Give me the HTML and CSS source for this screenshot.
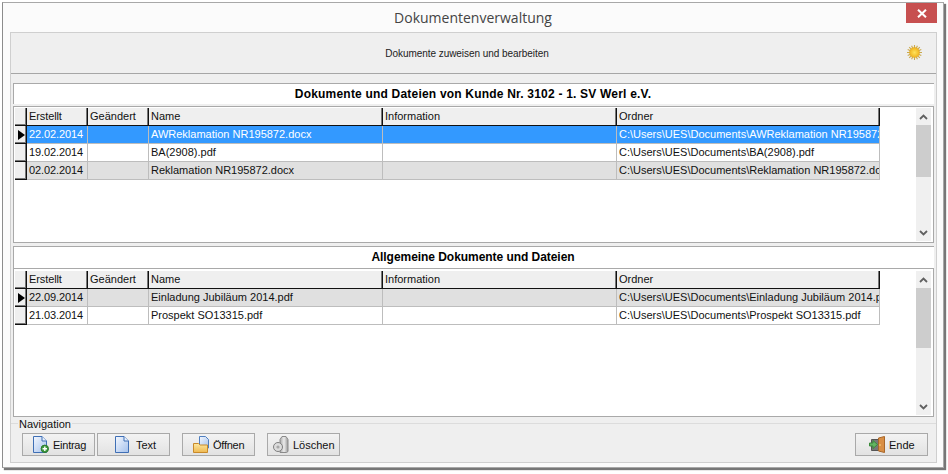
FILE: index.html
```html
<!DOCTYPE html>
<html lang="de">
<head>
<meta charset="utf-8">
<title>Dokumentenverwaltung</title>
<link rel="stylesheet" href="styles.css">
</head>
<body>
<svg class="defs" width="0" height="0" aria-hidden="true">
  <defs>
    <linearGradient id="page" x1="0" y1="0" x2="1" y2="1"><stop offset="0" stop-color="#f4f8fe"/><stop offset="1" stop-color="#a3c0ec"/></linearGradient>
    <linearGradient id="fold" x1="0" y1="0" x2="0" y2="1"><stop offset="0" stop-color="#fde9a2"/><stop offset="1" stop-color="#eeb850"/></linearGradient>
    <linearGradient id="bin" x1="0" y1="0" x2="1" y2="0"><stop offset="0" stop-color="#a9a9a9"/><stop offset=".5" stop-color="#ececec"/><stop offset="1" stop-color="#9a9a9a"/></linearGradient>
    <radialGradient id="sun"><stop offset="0" stop-color="#ffe25a"/><stop offset="1" stop-color="#f0b41e"/></radialGradient>
    <symbol id="doc" viewBox="0 0 14 17"><path d="M.5.500h8.500l4.500 4.500v11.500h-13z" fill="url(#page)" stroke="#3f6fb5"/><path d="M9 .5v4.500h4.500" fill="#e8f0fb" stroke="#3f6fb5"/></symbol>
  </defs>
</svg>
<div class="window">
  <div class="titlebar">
    <span class="title">Dokumentenverwaltung</span>
    <button class="close" type="button" aria-label="Schließen"><svg width="10" height="9" viewBox="0 0 10 9"><path d="M1 .7 9 8.300M9 .7 1 8.300" stroke="#fff" stroke-width="2"/></svg></button>
  </div>
  <div class="panel">
    <header class="head">
      <span class="head-text">Dokumente zuweisen und bearbeiten</span>
      <svg class="sun" width="15" height="15" viewBox="0 0 15 15"><g stroke="#c9a94e" stroke-width="1.100"><path d="M7.500 0v15M0 7.500h15M2.200 2.200l10.600 10.600M12.800 2.200 2.200 12.800M4.600.7l5.800 13.600M10.400.7 4.600 14.300M.7 4.600l13.600 5.800M14.300 4.600.7 10.400"/></g><circle cx="7.500" cy="7.500" r="5" fill="url(#sun)" stroke="#e2a92a" stroke-width=".6"/></svg>
    </header>
    <div class="content">
      <section class="section section-a">
        <h2 class="sec-title">Dokumente und Dateien von Kunde Nr. 3102 - 1. SV Werl e.V.</h2>
        <div class="frame frame-a">
          <div class="table">
            <div class="row hdr"><div class="ind"></div><div>Erstellt</div><div>Geändert</div><div>Name</div><div>Information</div><div>Ordner</div></div>
            <div class="row sel"><div class="ind"><i class="arrow"></i></div><div>22.02.2014</div><div></div><div>AWReklamation NR195872.docx</div><div></div><div>C:\Users\UES\Documents\AWReklamation NR195872.docx</div></div>
            <div class="row"><div class="ind"></div><div>19.02.2014</div><div></div><div>BA(2908).pdf</div><div></div><div>C:\Users\UES\Documents\BA(2908).pdf</div></div>
            <div class="row alt"><div class="ind"></div><div>02.02.2014</div><div></div><div>Reklamation NR195872.docx</div><div></div><div>C:\Users\UES\Documents\Reklamation NR195872.docx</div></div>
          </div>
          <div class="scroll">
            <span class="sbtn"><svg width="9" height="6" viewBox="0 0 9 6"><path d="M1 5l3.500-3.500L8 5" fill="none" stroke="#606060" stroke-width="1.800"/></svg></span>
            <span class="thumb thumb-a"></span>
            <span class="track"></span>
            <span class="sbtn"><svg width="9" height="6" viewBox="0 0 9 6"><path d="M1 1l3.500 3.500L8 1" fill="none" stroke="#606060" stroke-width="1.800"/></svg></span>
          </div>
        </div>
      </section>
      <section class="section section-b">
        <h2 class="sec-title">Allgemeine Dokumente und Dateien</h2>
        <div class="frame frame-b">
          <div class="table">
            <div class="row hdr"><div class="ind"></div><div>Erstellt</div><div>Geändert</div><div>Name</div><div>Information</div><div>Ordner</div></div>
            <div class="row alt"><div class="ind"><i class="arrow"></i></div><div>22.09.2014</div><div></div><div>Einladung Jubiläum 2014.pdf</div><div></div><div>C:\Users\UES\Documents\Einladung Jubiläum 2014.pdf</div></div>
            <div class="row"><div class="ind"></div><div>21.03.2014</div><div></div><div>Prospekt SO13315.pdf</div><div></div><div>C:\Users\UES\Documents\Prospekt SO13315.pdf</div></div>
          </div>
          <div class="scroll">
            <span class="sbtn"><svg width="9" height="6" viewBox="0 0 9 6"><path d="M1 5l3.500-3.500L8 5" fill="none" stroke="#606060" stroke-width="1.800"/></svg></span>
            <span class="thumb thumb-b"></span>
            <span class="track"></span>
            <span class="sbtn"><svg width="9" height="6" viewBox="0 0 9 6"><path d="M1 1l3.500 3.500L8 1" fill="none" stroke="#606060" stroke-width="1.800"/></svg></span>
          </div>
        </div>
      </section>
    </div>
    <div class="nav">
      <span class="nav-label">Navigation</span>
      <div class="buttons">
        <button class="btn btn-entry" type="button">
          <svg width="16" height="17" viewBox="0 0 16 17"><use href="#doc" width="14" height="17"/><circle cx="11.800" cy="12.800" r="3.700" fill="#3f9a3f" stroke="#2c7a2c"/><path d="M11.800 10.600v4.400M9.600 12.800h4.400" stroke="#fff" stroke-width="1.400"/></svg>
          <span>Eintrag</span>
        </button>
        <button class="btn btn-text" type="button">
          <svg width="14" height="17" viewBox="0 0 14 17"><use href="#doc" width="14" height="17"/></svg>
          <span>Text</span>
        </button>
        <button class="btn btn-open" type="button">
          <svg width="16" height="17" viewBox="0 0 16 17"><path d="M6.500.5h6l3 3v8.500h-9z" fill="url(#page)" stroke="#4f7fc0"/><path d="M.5 7.500h5l1.500 1.500h7.500v7.500h-14z" fill="url(#fold)" stroke="#c98a2a"/></svg>
          <span>Öffnen</span>
        </button>
        <button class="btn btn-del" type="button">
          <svg width="16" height="17" viewBox="0 0 16 17"><path d="M7 3.500l2-3h4l2 3v12l-1.500 1h-6.500z" fill="url(#bin)" stroke="#8a8a8a"/><circle cx="5" cy="11" r="4.500" fill="#dcdcdc" stroke="#7f7f7f"/><circle cx="5" cy="11" r="1.600" fill="#a8a8a8"/></svg>
          <span>Löschen</span>
        </button>
        <button class="btn btn-end" type="button">
          <svg width="16" height="17" viewBox="0 0 16 17"><path d="M2.500 3.500h8v11h-8z" fill="#777" stroke="#555"/><path d="M9.500 2l6-1.500v16l-6-1.500z" fill="#d98f45" stroke="#a8672a"/><circle cx="11" cy="9" r=".8" fill="#ffe28a"/><path d="M.5 7h3.500v-2.500l4.500 4-4.500 4v-2.500h-3.500z" fill="#63b463" stroke="#3a8a3a"/></svg>
          <span>Ende</span>
        </button>
      </div>
    </div>
  </div>
</div>
</body>
</html>
```

FILE: styles.css
```css
* { box-sizing: border-box; }
html, body { margin: 0; padding: 0; height: 100%; background: #fff; overflow: hidden; }
body { padding: 2px 0 0 2px; font: 11px/1 "Liberation Sans", Arial, sans-serif; color: #111; }
.defs { position: absolute; }

.window {
  width: 942px; height: 466px; background: #fbfbfb;
  border: 1px solid #a8a8a8; border-left-color: #8c8c8c;
  box-shadow: 2px 2px 1px #777;
  padding: 0 6px 4px 7px;
  display: flex; flex-direction: column;
}
.titlebar { height: 29px; flex: none; position: relative; display: flex; justify-content: center; align-items: center; padding-right: 1px; }
.title { font: 14px "Open Sans", sans-serif; color: #444; }
.close {
  position: absolute; right: 0; top: 0; width: 31px; height: 20px; padding: 0; border: 0;
  background: #c75050; display: flex; align-items: center; justify-content: center;
}

.panel { flex: 1; min-height: 0; background: #efefef; border: 1px solid #cfcfcf; display: flex; flex-direction: column; }
.head { height: 41px; flex: none; display: flex; align-items: center; justify-content: center; position: relative; padding: 1px 13px 0 0; border-bottom: 1px solid #a6a6a6; }
.head-text { font-size: 10px; letter-spacing: -.05px; color: #222; }
.sun { position: absolute; right: 14px; top: 12px; }

.content { padding: 9px 2px 0 2px; display: flex; flex-direction: column; gap: 3px; }
.section { display: flex; flex-direction: column; }
.section-a { gap: 2px; }
.sec-title {
  margin: 0; height: 21px; padding-right: 2px; background: #fff; border: 1px solid #a9a9a9; border-width: 1px 0 0 1px;
  font-size: 12px; font-weight: bold; letter-spacing: .2px; color: #000; text-align: center; line-height: 20px;
}
.section-b .sec-title { height: 22px; line-height: 21px; letter-spacing: -.05px; }
.frame { display: flex; background: #fff; border: 1px solid #a9a9a9; padding: 1px 2px 1px 1px; }
.frame-a { height: 137px; }
.frame-b { height: 149px; padding-top: 2px; }

.table { width: 865px; flex: none; }
.row { display: grid; grid-template-columns: 12px 61px 61px 234px 234px 263px; height: 18px; background: #fff; }
.row > div { border: solid #bdbdbd; border-width: 0 1px 1px 0; padding: 3px 0 0 2px; white-space: nowrap; overflow: hidden; }
.row > .ind { background: #efefef; border-color: #111; padding: 0; position: relative; box-shadow: inset -1px -1px #777; }
.hdr > div { background: #efefef; border-color: #111; box-shadow: inset -1px 0 #777; }
.row > div:nth-child(2) { letter-spacing: -.1px; }
.alt { background: #e0e0e0; }
.sel { background: #3399ff; color: #fff; }
.arrow { position: absolute; left: 3px; top: 4px; border: solid transparent; border-width: 5px 0 5px 7px; border-left-color: #000; }

.scroll { margin-left: auto; width: 15px; display: flex; flex-direction: column; background: #f0f0f0; }
.sbtn { height: 17px; flex: none; display: flex; align-items: center; justify-content: center; }
.thumb { flex: none; background: #cdcdcd; }
.thumb-a { height: 52px; }
.thumb-b { height: 60px; }
.track { flex: 1; }

.nav { flex: 1; position: relative; margin-top: 6px; border-top: 1px solid #dcdcdc; padding: 9px 8px 0 11px; }
.nav-label { position: absolute; left: 7px; top: -5px; padding: 0 1px; background: #efefef; font-size: 11px; color: #111; }
.buttons { display: flex; gap: 2px; }
.btn {
  width: 73px; height: 23px; flex: none; padding: 0; display: flex; align-items: center; gap: 4px;
  border: 1px solid #a9a9a9; background: linear-gradient(#f3f3f3, #e2e2e2);
  font: 11px "Liberation Sans", Arial, sans-serif; color: #111;
}
.btn-entry { padding-left: 10px; letter-spacing: -.25px; }
.btn-text { padding-left: 17px; gap: 7px; }
.btn-open { margin-left: 10px; padding-left: 10px; letter-spacing: -.25px; }
.btn-del { margin-left: 10px; padding-left: 5px; }
.btn-end { margin-left: auto; padding-left: 13px; }
```
